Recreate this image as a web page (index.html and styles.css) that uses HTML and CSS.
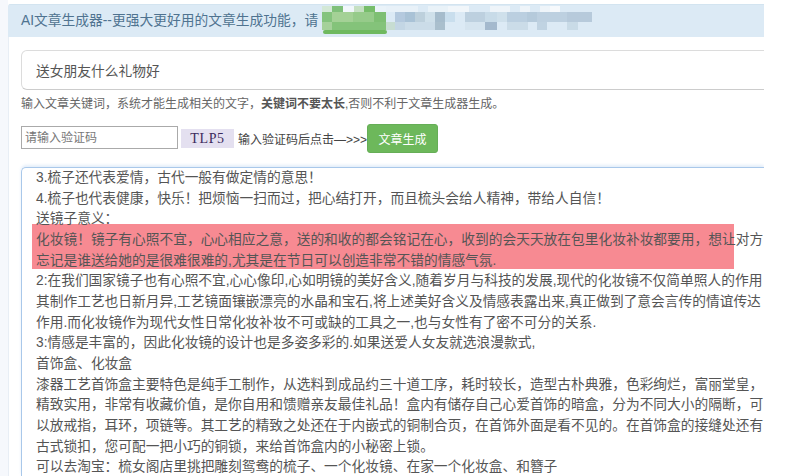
FILE: index.html
```html
<!DOCTYPE html>
<html lang="zh">
<head>
<meta charset="utf-8">
<title>AI文章生成器</title>
<link rel="stylesheet" href="styles.css">
</head>
<body>
<main class="panel">
  <header class="panel-head">
    <span>AI文章生成器--更强大更好用的文章生成功能，请</span>
    <svg class="mosaic" width="272" height="29" viewBox="0 0 272 29" aria-hidden="true">
      <rect x="0" y="0" width="10" height="6" fill="#d3e8d6"/>
      <rect x="10" y="0" width="11" height="6" fill="#7fc07a"/>
      <rect x="21" y="0" width="11" height="6" fill="#f1f7fb"/>
      <rect x="32" y="0" width="10" height="6" fill="#c5e0c2"/>
      <rect x="42" y="0" width="11" height="6" fill="#76bd6a"/>
      <rect x="53" y="0" width="11" height="6" fill="#eaf3f9"/>
      <rect x="64" y="0" width="32" height="6" fill="#e8f1f8"/>
      <rect x="106" y="0" width="20" height="6" fill="#e9f2f8"/>
      <rect x="126" y="0" width="21" height="6" fill="#f1f6fa"/>
      <rect x="168" y="0" width="20" height="6" fill="#eef4f9"/>
      <rect x="198" y="0" width="10" height="6" fill="#eef4f9"/>
      <rect x="218" y="0" width="10" height="6" fill="#eef4f9"/>
      <rect x="228" y="0" width="10" height="6" fill="#f6f9fc"/>
      <rect x="0" y="6" width="10" height="10" fill="#84c37d"/>
      <rect x="10" y="6" width="21" height="10" fill="#a4d196"/>
      <rect x="31" y="6" width="21" height="10" fill="#96cb8a"/>
      <rect x="52" y="6" width="12" height="10" fill="#7ebf73"/>
      <rect x="73" y="6" width="10" height="10" fill="#b4c9de"/>
      <rect x="83" y="6" width="10" height="10" fill="#a9c2d6"/>
      <rect x="93" y="6" width="10" height="10" fill="#bdd0dc"/>
      <rect x="103" y="6" width="10" height="10" fill="#cfe0ea"/>
      <rect x="113" y="6" width="10" height="10" fill="#a6bccc"/>
      <rect x="123" y="6" width="10" height="10" fill="#c9deed"/>
      <rect x="143" y="6" width="20" height="10" fill="#bdd0df"/>
      <rect x="163" y="6" width="12" height="10" fill="#c8dbe8"/>
      <rect x="175" y="6" width="10" height="10" fill="#cfe0eb"/>
      <rect x="185" y="6" width="20" height="10" fill="#bbcfe0"/>
      <rect x="205" y="6" width="10" height="10" fill="#b5cadb"/>
      <rect x="215" y="6" width="30" height="10" fill="#bdd0e0"/>
      <rect x="245" y="6" width="25" height="10" fill="#b7cadb"/>
      <rect x="0" y="16" width="10" height="8" fill="#a5d19a"/>
      <rect x="10" y="16" width="54" height="8" fill="#84c37a"/>
      <rect x="64" y="16" width="9" height="8" fill="#c7ddd2"/>
      <rect x="73" y="16" width="10" height="8" fill="#c3d6e4"/>
      <rect x="83" y="16" width="30" height="8" fill="#cbdce8"/>
      <rect x="113" y="16" width="10" height="8" fill="#aabfcd"/>
      <rect x="143" y="16" width="20" height="8" fill="#d5e4ef"/>
      <rect x="163" y="16" width="12" height="8" fill="#a4b9cd"/>
      <rect x="185" y="16" width="21" height="8" fill="#cbdce8"/>
      <rect x="215" y="16" width="10" height="8" fill="#c0d3e2"/>
      <rect x="245" y="16" width="11" height="8" fill="#c9dbe7"/>
      <rect x="1" y="24" width="64" height="4" rx="2" fill="#6fb95f"/>
    </svg>
  </header>

  <input class="keyword" type="text" value="送女朋友什么礼物好">
  <p class="hint">输入文章关键词，系统才能生成相关的文字，<strong>关键词不要太长</strong>,否则不利于文章生成器生成。</p>

  <div class="captcha-row">
    <input class="captcha-input" type="text" placeholder="请输入验证码">
    <span class="captcha-code">TLP5</span>
    <span class="captcha-note">输入验证码后点击—&gt;&gt;&gt;</span>
    <button class="generate" type="button">文章生成</button>
  </div>

  <section class="result">
    <div class="highlight"></div>
    <div class="result-text">
      <p>3.梳子还代表爱情，古代一般有做定情的意思！</p>
      <p>4.梳子也代表健康，快乐！把烦恼一扫而过，把心结打开，而且梳头会给人精神，带给人自信！</p>
      <p>送镜子意义：</p>
      <p>化妆镜！镜子有心照不宜，心心相应之意，送的和收的都会铭记在心，收到的会天天放在包里化妆补妆都要用，想让对方</p>
      <p>忘记是谁送给她的是很难很难的,尤其是在节日可以创造非常不错的情感气氛.</p>
      <p>2:在我们国家镜子也有心照不宜,心心像印,心如明镜的美好含义,随着岁月与科技的发展,现代的化妆镜不仅简单照人的作用</p>
      <p>其制作工艺也日新月异,工艺镜面镶嵌漂亮的水晶和宝石,将上述美好含义及情感表露出来,真正做到了意会言传的情谊传达</p>
      <p>作用.而化妆镜作为现代女性日常化妆补妆不可或缺的工具之一,也与女性有了密不可分的关系.</p>
      <p>3:情感是丰富的，因此化妆镜的设计也是多姿多彩的.如果送爱人女友就选浪漫款式,</p>
      <p>首饰盒、化妆盒</p>
      <p>漆器工艺首饰盒主要特色是纯手工制作，从选料到成品约三十道工序，耗时较长，造型古朴典雅，色彩绚烂，富丽堂皇，</p>
      <p>精致实用，非常有收藏价值，是你自用和馈赠亲友最佳礼品！盒内有储存自己心爱首饰的暗盒，分为不同大小的隔断，可</p>
      <p>以放戒指，耳环，项链等。其工艺的精致之处还在于内嵌式的铜制合页，在首饰外面是看不见的。在首饰盒的接缝处还有</p>
      <p>古式锁扣，您可配一把小巧的铜锁，来给首饰盒内的小秘密上锁。</p>
      <p>可以去淘宝：梳女阁店里挑把雕刻鸳鸯的梳子、一个化妆镜、在家一个化妆盒、和簪子</p>
    </div>
  </section>
</main>
</body>
</html>
```

FILE: styles.css
```css
* { box-sizing: border-box; }

html, body {
  margin: 0;
  height: 476px;
  overflow: hidden;
  background: #fff;
}

body {
  font-family: "Liberation Sans", "Noto Sans CJK SC", sans-serif;
  color: #555;
  background: linear-gradient(to right, #f6f8fc 8px, #fff 8px);
}

.panel {
  position: relative;
  margin: 4px 0 0 8px;
  width: 756px;
  height: 472px;
  overflow: hidden;
  background: #fff;
  border-top-left-radius: 3px;
  box-shadow: inset 1px 0 0 #e8eef5;
}

.panel-head {
  display: flex;
  align-items: flex-start;
  gap: 4px;
  height: 33px;
  padding-left: 13px;
  background: #dceaf5;
  border-top: 1px solid #d3e4f0;
  color: #4f7390;
  font-size: 13.75px;
  line-height: 32px;
}

.mosaic {
  flex: none;
  margin-top: 1px;
}

.keyword {
  display: block;
  width: 800px;
  height: 40px;
  margin: 13px 0 0 13px;
  padding: 0 14px;
  border: 1px solid #dcdcdc;
  border-bottom-color: #ccc;
  border-radius: 6px;
  background: #fff;
  color: #555;
  font: 13.75px "Liberation Sans", "Noto Sans CJK SC", sans-serif;
}

.hint {
  margin: 6px 0 0 13px;
  font-size: 12px;
  line-height: 17px;
  color: #666;
}

.hint strong { color: #555; }

.captcha-row {
  display: flex;
  align-items: center;
  gap: 3px;
  margin: 11px 0 0 13px;
  height: 29px;
}

.captcha-input {
  width: 157px;
  height: 23px;
  margin-top: -2px;
  padding: 0 3px;
  border: 1px solid #aaa;
  background: #fff;
  color: #555;
  font: 12px "Liberation Sans", "Noto Sans CJK SC", sans-serif;
}

.captcha-input::placeholder { color: #777; opacity: 1; }

.captcha-code {
  width: 53px;
  height: 19px;
  text-align: center;
  background: #e4e0f0;
  color: #3b2a5c;
  font: 14px/20px "Liberation Serif", serif;
  letter-spacing: .6px;
}

.captcha-note {
  margin-left: 1px;
  font-size: 12px;
  color: #444;
  white-space: nowrap;
}

.generate {
  width: 71px;
  height: 29px;
  margin-left: -3px;
  padding: 0;
  border: 1px solid #66ae57;
  border-radius: 3px;
  background: #6db85b;
  color: #fff;
  font: 12px "Liberation Sans", "Noto Sans CJK SC", sans-serif;
}

.result {
  position: relative;
  width: 743px;
  height: 309px;
  margin: 14px 0 0 13px;
  padding: 0 0 0 14px;
  border: 1px solid #a9c8ea;
  border-width: 1px 0 0 1px;
  border-top-left-radius: 5px;
  box-shadow: 0 -2px 3px rgba(120, 170, 230, .2);
}

.result-text {
  position: relative;
  font-size: 13.72px;
  line-height: 20.67px;
  white-space: nowrap;
  color: #555;
}

.result-text p { margin: 0; }

.highlight {
  position: absolute;
  left: 10px;
  top: 56px;
  width: 702px;
  height: 45px;
  background: rgba(243, 88, 100, .7);
}
```
